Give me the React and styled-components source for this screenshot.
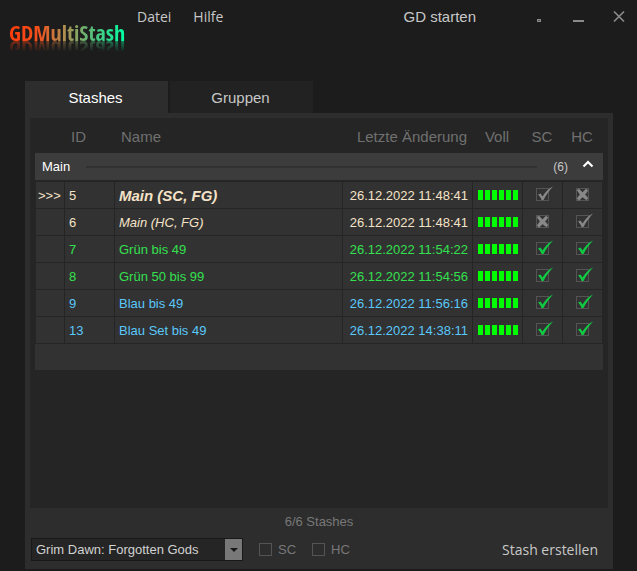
import React, { useState } from "react";
import styled, { createGlobalStyle } from "styled-components";

const GlobalStyle = createGlobalStyle`
  *, *::before, *::after { box-sizing: border-box; }
  body {
    margin: 0;
    background: #1c1c1c;
    color: #c8c8c8;
    font: 13px/16px "Liberation Sans", Arial, sans-serif;
  }
  button, select, input { font: inherit; color: inherit; margin: 0; }
`;

const Window = styled.div`
  display: flex;
  flex-direction: column;
  min-height: 100vh;
  padding-bottom: 2px;
`;

const TitleBar = styled.header`
  display: flex;
  align-items: flex-start;
  height: 81px;
  padding: 7px 2px 0 9px;
`;

const Logo = styled.h1`
  margin: 0;
  width: 118px;
  padding-top: 8px;
  font: 300 22px/34px "Open Sans Condensed", "Roboto Condensed", Lato, sans-serif;
  white-space: nowrap;
  span {
    display: inline-block;
    background: linear-gradient(90deg, #ff3c0c 0%, #f5501c 25%, #a99455 50%, #5cba78 70%, #00ffa5 100%);
    background-clip: text;
    -webkit-text-fill-color: transparent;
    -webkit-box-reflect: below -16px linear-gradient(transparent 45%, rgba(0, 0, 0, 0.5) 80%);
  }
`;

const Menu = styled.nav`
  display: flex;
  gap: 8px;
`;

const FlatButton = styled.button`
  border: 0;
  padding: 0 ${(p) => p.$pad ?? 6}px;
  background: none;
  color: #c8c8c8;
  font: ${(p) => (p.$plain ? '15px/20px "Liberation Sans", Arial' : '14px/20px "Open Sans", "Noto Sans"')}, sans-serif;
  white-space: nowrap;
`;

const TitleActions = styled.div`
  display: flex;
  margin-left: auto;
`;

const WindowButtons = styled.div`
  display: flex;
  margin-left: 37px;
`;

const WindowButton = styled.button`
  display: flex;
  justify-content: center;
  width: 40px;
  height: 20px;
  padding: 3px 0 0;
  border: 0;
  background: none;
  &:last-child { width: 32px; margin-left: 4px; }
`;

const Main = styled.main`
  display: flex;
  flex: 1;
  flex-direction: column;
  margin: 0 24px 0 25px;
`;

const Tabs = styled.div`
  display: flex;
  gap: 2px;
`;

const Tab = styled.button`
  width: 143px;
  height: 32px;
  padding: 2px 2px 0 0;
  border: 0;
  background: ${(p) => (p.$active ? "#2d2d2d" : "#222222")};
  color: ${(p) => (p.$active ? "#ffffff" : "#c8c8c8")};
  font-size: 15px;
`;

const Panel = styled.section`
  display: flex;
  flex: 1;
  flex-direction: column;
  padding: 5px 5px 8px;
  background: #2d2d2d;
`;

const ListArea = styled.div`
  flex: 1;
  padding: 0 5px;
  background: #252525;
`;

const Table = styled.table`
  width: 100%;
  table-layout: fixed;
  border-collapse: separate;
  border-spacing: 0;
`;

const Col = styled.col`
  width: ${(p) => (p.$w ? `${p.$w}px` : "auto")};
`;

const HeadCell = styled.th`
  height: 35px;
  padding: 3px 6px 0;
  color: #707070;
  font-size: 15px;
  font-weight: 400;
  text-align: ${(p) => p.$align ?? "left"};
  white-space: nowrap;
  ${(p) => p.$align === "center" && "padding-left: 0; padding-right: 2px;"}
`;

const GroupCell = styled.th`
  padding: 0 0 2px;
  font-weight: 400;
`;

const GroupBar = styled.div`
  display: flex;
  align-items: center;
  height: 27px;
  padding: 0 7px;
  background: #3c3c3c;
  color: #ffffff;
`;

const GroupLine = styled.span`
  flex: 1;
  height: 2px;
  margin: 0 16px;
  background: #313131;
`;

const GroupCount = styled.span`
  color: #c8c8c8;
  font-size: 12px;
`;

const Collapse = styled.button`
  display: flex;
  margin-left: 12px;
  padding: 0 2px 6px;
  border: 0;
  background: none;
`;

const Row = styled.tr`
  color: ${(p) => p.$color};
`;

const Cell = styled.td`
  height: 27px;
  padding: 1px 4px 0;
  border: solid #252525;
  border-width: 0 1px 1px 0;
  background: #323232;
  white-space: nowrap;
  font-style: ${(p) => (p.$italic ? "italic" : "normal")};
  ${(p) => p.$strong && "font-weight: 700; font-size: 15px;"}
  ${(p) => p.$align && `text-align: ${p.$align};`}
  &:first-child { padding: 1px 0 0 2px; border-left-width: 1px; }
`;

const BarsCell = styled(Cell)`
  padding-top: 0;
`;

const TickCell = styled(Cell)`
  padding: 0 4px 1px;
`;

const GroupEnd = styled.td`
  height: 26px;
  padding: 0;
  background: #323232;
`;

const Bars = styled.div`
  display: flex;
  gap: 2px;
  padding-left: 1px;
  i { width: 5px; height: 10px; background: #00ff00; }
`;

const TickWrap = styled.label`
  position: relative;
  display: block;
  width: 13px;
  height: 13px;
  margin-left: 9px;
  svg {
    position: absolute;
    left: 0;
    bottom: 0;
    pointer-events: none;
  }
`;

const Box = styled.input.attrs({ type: "checkbox" })`
  appearance: none;
  display: block;
  width: 13px;
  height: 13px;
  border: 1px solid #545454;
  background: transparent;
  &:checked { background: ${(p) => (p.$fill ? "#787878" : "transparent")}; }
`;

const Status = styled.p`
  margin: 6px 0 8px;
  color: #787878;
  text-align: center;
`;

const Controls = styled.div`
  display: flex;
  align-items: center;
  padding-left: 1px;
`;

const SelectWrap = styled.div`
  position: relative;
  width: 212px;
  height: 23px;
  margin-right: 16px;
`;

const Select = styled.select`
  appearance: none;
  width: 100%;
  height: 100%;
  padding: 0 20px 0 4px;
  border: 1px solid #181818;
  border-radius: 0;
  background: #252525;
  color: #d2d2d2;
`;

const SelectArrow = styled.span`
  position: absolute;
  inset: 1px 1px 1px auto;
  display: flex;
  align-items: center;
  justify-content: center;
  width: 17px;
  background: #787878;
  pointer-events: none;
`;

const Filter = styled.label`
  display: flex;
  align-items: center;
  gap: 6px;
  margin-right: 16px;
  color: #787878;
`;

const Create = styled(FlatButton)`
  margin-left: auto;
`;

const BEIGE = "#f5e3c8";
const GREEN = "#34e04f";
const BLUE = "#5ac8fa";

const stashes = [
  { id: 5, name: "Main (SC, FG)", date: "26.12.2022 11:48:41", color: BEIGE, italic: true, active: true, sc: "on", hc: "off" },
  { id: 6, name: "Main (HC, FG)", date: "26.12.2022 11:48:41", color: BEIGE, italic: true, sc: "off", hc: "on" },
  { id: 7, name: "Grün bis 49", date: "26.12.2022 11:54:22", color: GREEN, sc: "green", hc: "green" },
  { id: 8, name: "Grün 50 bis 99", date: "26.12.2022 11:54:56", color: GREEN, sc: "green", hc: "green" },
  { id: 9, name: "Blau bis 49", date: "26.12.2022 11:56:16", color: BLUE, sc: "green", hc: "green" },
  { id: 13, name: "Blau Set bis 49", date: "26.12.2022 14:38:11", color: BLUE, sc: "green", hc: "green" },
];

function Tick({ state, label }) {
  return (
    <TickWrap>
      <Box aria-label={label} defaultChecked={state !== "off"} />
      {state === "off" ? (
        <svg width="13" height="13" viewBox="0 0 13 13" aria-hidden="true">
          <path d="M1 2 3 1 6.5 4.5 10 1 12 2.5 9 6.5 12 10 10.5 12 6.5 9 3 12.5 1 10.5 4 6.5Z" fill="#888888" stroke="#888888" strokeWidth="0.5" />
        </svg>
      ) : (
        <svg width="18" height="15" viewBox="0 0 18 15" aria-hidden="true">
          <path d="M2 8.5 4.5 7.5 6.5 10.5C9 6.5 12.5 2.5 17 0.5 13.5 4 10 9 7.5 14H5.5C5 12 3.5 10 2 8.5Z" fill={state === "green" ? "#12c944" : "#888888"} />
        </svg>
      )}
    </TickWrap>
  );
}

export default function App() {
  const [tab, setTab] = useState("Stashes");
  return (
    <Window>
      <GlobalStyle />
      <TitleBar>
        <Logo><span>GDMultiStash</span></Logo>
        <Menu>
          <FlatButton $pad={10}>Datei</FlatButton>
          <FlatButton $pad={4}>Hilfe</FlatButton>
        </Menu>
        <TitleActions>
          <FlatButton $plain>GD starten</FlatButton>
          <WindowButtons>
            <WindowButton aria-label="Kompakt">
              <svg width="12" height="13" viewBox="0 0 12 13"><path d="M4 9h4v3H4z" fill="#8a8a8a" /><path d="M5 10h2v1H5z" fill="#555555" /></svg>
            </WindowButton>
            <WindowButton aria-label="Minimieren">
              <svg width="12" height="13" viewBox="0 0 12 13"><path d="M0 10h11v2H0z" fill="#8a8a8a" /></svg>
            </WindowButton>
            <WindowButton aria-label="Schließen">
              <svg width="12" height="13" viewBox="0 0 12 13"><path d="M1 1.5 11 11.5M11 1.5 1 11.5" stroke="#8a8a8a" strokeWidth="1.7" /></svg>
            </WindowButton>
          </WindowButtons>
        </TitleActions>
      </TitleBar>
      <Main>
        <Tabs role="tablist">
          {["Stashes", "Gruppen"].map((name) => (
            <Tab key={name} role="tab" aria-selected={tab === name} $active={tab === name} onClick={() => setTab(name)}>
              {name}
            </Tab>
          ))}
        </Tabs>
        <Panel>
          <ListArea>
            <Table>
              <colgroup>
                <Col $w={30} /><Col $w={50} /><Col /><Col $w={130} /><Col $w={50} /><Col $w={40} /><Col $w={40} />
              </colgroup>
              <thead>
                <tr>
                  <HeadCell aria-label="Aktiv" />
                  <HeadCell>ID</HeadCell>
                  <HeadCell>Name</HeadCell>
                  <HeadCell $align="right">Letzte Änderung</HeadCell>
                  <HeadCell $align="center">Voll</HeadCell>
                  <HeadCell $align="center">SC</HeadCell>
                  <HeadCell $align="center">HC</HeadCell>
                </tr>
              </thead>
              <tbody>
                <tr>
                  <GroupCell colSpan={7}>
                    <GroupBar>
                      Main
                      <GroupLine />
                      <GroupCount>(6)</GroupCount>
                      <Collapse aria-label="Gruppe einklappen">
                        <svg width="12" height="8" viewBox="0 0 12 8"><path d="M1.5 6.5 6 2 10.5 6.5" fill="none" stroke="#ffffff" strokeWidth="2.2" /></svg>
                      </Collapse>
                    </GroupBar>
                  </GroupCell>
                </tr>
                {stashes.map((s) => (
                  <Row key={s.id} $color={s.color}>
                    <Cell>{s.active ? ">>>" : ""}</Cell>
                    <Cell>{s.id}</Cell>
                    <Cell $italic={s.italic} $strong={s.active}>{s.name}</Cell>
                    <Cell $align="right">{s.date}</Cell>
                    <BarsCell><Bars>{[0, 1, 2, 3, 4, 5].map((n) => <i key={n} />)}</Bars></BarsCell>
                    <TickCell><Tick state={s.sc} label={`${s.name} SC`} /></TickCell>
                    <TickCell><Tick state={s.hc} label={`${s.name} HC`} /></TickCell>
                  </Row>
                ))}
                <tr><GroupEnd colSpan={7} /></tr>
              </tbody>
            </Table>
          </ListArea>
          <Status>6/6 Stashes</Status>
          <Controls>
            <SelectWrap>
              <Select aria-label="Spielversion">
                <option>Grim Dawn: Forgotten Gods</option>
              </Select>
              <SelectArrow>
                <svg width="8" height="4" viewBox="0 0 8 4"><path d="M0 0h8L4 4z" fill="#181818" /></svg>
              </SelectArrow>
            </SelectWrap>
            <Filter><Box $fill />SC</Filter>
            <Filter><Box $fill />HC</Filter>
            <Create $pad={10}>Stash erstellen</Create>
          </Controls>
        </Panel>
      </Main>
    </Window>
  );
}
